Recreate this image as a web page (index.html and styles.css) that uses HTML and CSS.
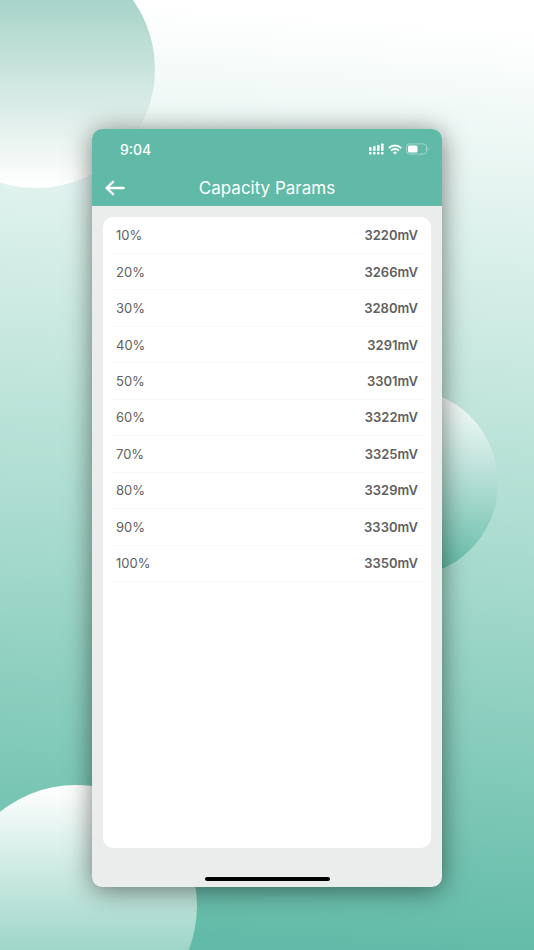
FILE: index.html
```
<!DOCTYPE html>
<html lang="en">
<head>
    <meta charset="UTF-8">
    <meta name="viewport" content="width=device-width, initial-scale=1.0">
    <title>Capacity Params</title>
    <link rel="stylesheet" href="styles.css">
</head>
<body>
    <div class="backdrop">
        <div class="circle circle-top"></div>
        <div class="circle circle-right"></div>
        <div class="circle circle-bottom"></div>
    </div>

    <main class="phone">
        <header class="header">
            <div class="status-bar">
                <span class="time">9:04</span>
                <div class="status-icons">
                    <svg width="15" height="12" viewBox="0 0 15 12" fill="#fff" aria-label="Signal">
                        <rect x="0" y="4" width="2.6" height="4" rx="0.8"/>
                        <rect x="4" y="3" width="2.6" height="5" rx="0.8"/>
                        <rect x="8" y="2" width="2.6" height="6" rx="0.8"/>
                        <rect x="12" y="0.4" width="2.6" height="7.6" rx="0.8"/>
                        <rect x="0" y="9" width="2.6" height="2.6" rx="0.8"/>
                        <rect x="4" y="9" width="2.6" height="2.6" rx="0.8"/>
                        <rect x="8" y="9" width="2.6" height="2.6" rx="0.8"/>
                        <rect x="12" y="9" width="2.6" height="2.6" rx="0.8"/>
                    </svg>
                    <svg width="14" height="11" viewBox="0 0 14 11" fill="none" stroke="#fff" stroke-width="2" aria-label="Wi-Fi">
                        <path d="M0.8 4.1a8.8 8.8 0 0 1 12.4 0"/>
                        <path d="M3.1 6.6a5.5 5.5 0 0 1 7.8 0"/>
                        <path d="M7 10.6L4.9 8.5a3 3 0 0 1 4.2 0z" fill="#fff" stroke="none"/>
                    </svg>
                    <svg width="23" height="12" viewBox="0 0 23 12" aria-label="Battery">
                        <rect x="0.5" y="0.9" width="20" height="10.2" rx="3" fill="none" stroke="#fff" stroke-opacity="0.4"/>
                        <rect x="2" y="2.4" width="9.5" height="7.2" rx="1.5" fill="#fff"/>
                        <path d="M21.6 4.3c1.2 0.5 1.2 2.9 0 3.4z" fill="#fff" fill-opacity="0.5"/>
                    </svg>
                </div>
            </div>
            <div class="nav-bar">
                <button class="back" type="button" aria-label="Back">
                    <svg width="20" height="16" viewBox="0 0 20 16" fill="none" stroke="#fff" stroke-width="2.4" stroke-linecap="round" stroke-linejoin="round">
                        <path d="M18.6 8H2M8 1.8L1.6 8L8 14.2"/>
                    </svg>
                </button>
                <h1>Capacity Params</h1>
            </div>
        </header>

        <section class="card">
            <table class="params">
                <tbody>
                    <tr><th scope="row">10%</th><td>3220mV</td></tr>
                    <tr><th scope="row">20%</th><td>3266mV</td></tr>
                    <tr><th scope="row">30%</th><td>3280mV</td></tr>
                    <tr><th scope="row">40%</th><td>3291mV</td></tr>
                    <tr><th scope="row">50%</th><td>3301mV</td></tr>
                    <tr><th scope="row">60%</th><td>3322mV</td></tr>
                    <tr><th scope="row">70%</th><td>3325mV</td></tr>
                    <tr><th scope="row">80%</th><td>3329mV</td></tr>
                    <tr><th scope="row">90%</th><td>3330mV</td></tr>
                    <tr><th scope="row">100%</th><td>3350mV</td></tr>
                </tbody>
            </table>
        </section>

        <div class="home-indicator"></div>
    </main>
</body>
</html>
```
FILE: styles.css
```
* {
    box-sizing: border-box;
}
body {
    position: relative;
    display: flex;
    min-height: 100vh;
    margin: 0;
    padding: 129px 92px 63px;
    font-family: Inter, "Liberation Sans", sans-serif;
}

/* Background with circles */
.backdrop {
    position: absolute;
    inset: 0;
    overflow: hidden;
    background: linear-gradient(184deg, #fff 3%, #a3d9cb 60%, #62bba8 97%);
}
.circle {
    position: absolute;
    border-radius: 50%;
}
.circle-top {
    top: -50px;
    left: -83px;
    width: 238px;
    height: 238px;
    background: linear-gradient(#8fcabb, #cfe6e0 55%, #fff);
}
.circle-right {
    top: 389px;
    right: 36px;
    width: 188px;
    height: 188px;
    background: linear-gradient(#fff, #a9dace 55%, #5fbaa6);
}
.circle-bottom {
    bottom: -77px;
    left: -45px;
    width: 242px;
    height: 242px;
    background: linear-gradient(#fff, #a3d8cb 65%, #62bba8);
}

.phone {
    position: relative;
    flex: 1;
    display: flex;
    flex-direction: column;
    overflow: hidden;
    border-radius: 10px;
    background: #ebedec;
    box-shadow: 0 3px 26px rgba(0, 0, 0, 0.5);
}
.header {
    color: #fff;
    background: #60baa7;
}
.status-bar {
    display: flex;
    align-items: center;
    justify-content: space-between;
    height: 40px;
    padding: 0 13px 0 28px;
}
.time {
    font-size: 14px;
    font-weight: 500;
}
.status-icons {
    display: flex;
    align-items: center;
    gap: 4px;
}
.nav-bar {
    display: grid;
    grid-template-columns: 46px 1fr 46px;
    align-items: center;
    height: 37px;
}
.back {
    display: flex;
    justify-content: center;
    padding: 0;
    border: none;
    background: none;
    cursor: pointer;
}
h1 {
    margin: 0;
    font-size: 17px;
    font-weight: 400;
    text-align: center;
}

.card {
    flex: 1;
    margin: 11px 11px 0;
    padding: 1px 8px 0;
    border-radius: 10px;
    background: #fff;
}
.params {
    width: 100%;
    height: 364px;
    border-collapse: collapse;
    font-size: 13px;
    color: #606060;
}
.params th,
.params td {
    padding: 0 5px;
    border-bottom: 1px solid #f8f8f8;
}
.params th {
    font-weight: 400;
    text-align: left;
}
.params td {
    font-weight: 600;
    text-align: right;
}
.home-indicator {
    width: 125px;
    height: 4px;
    margin: 29px auto 6px;
    border-radius: 2px;
    background: #000;
}
```
